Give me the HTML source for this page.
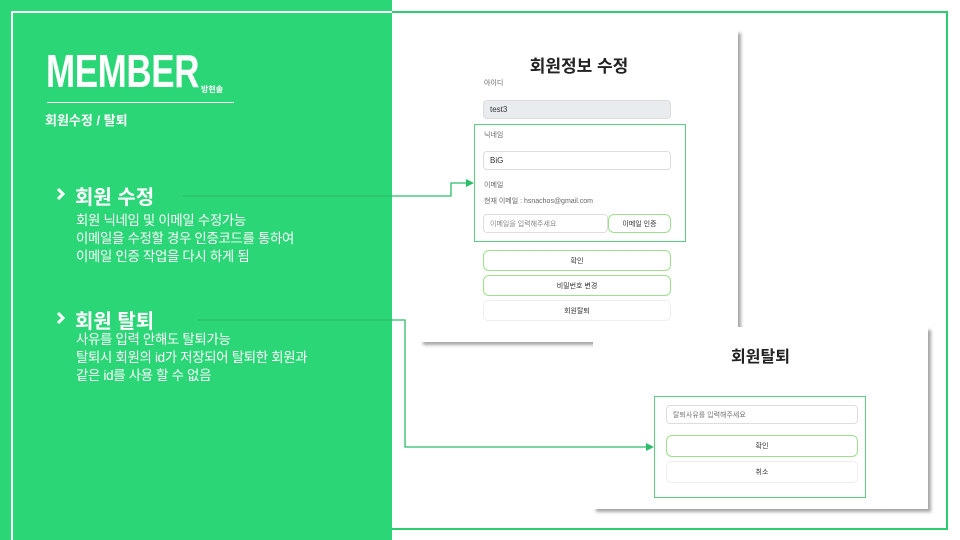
<!DOCTYPE html>
<html><head><meta charset="utf-8"><style>
*{margin:0;padding:0;box-sizing:border-box}
body{width:960px;height:540px;position:relative;background:#fff;font-family:"Liberation Sans","Noto Sans CJK KR",sans-serif;overflow:hidden}
.abs{position:absolute}
.green{left:0;top:0;width:392px;height:540px;background:#2bd677}
.w{color:#fff}
.card{background:#fff;box-shadow:3px 3px 3px rgba(0,0,0,.35)}
.lbl{font-size:7px;color:#666}
.inp{border:1px solid #ddd;border-radius:4px;font-size:8px;color:#333;padding-left:6px;display:flex;align-items:center;background:#fff}
.btn{border:1.5px solid #9ee08e;border-radius:6px;font-size:7px;color:#333;display:flex;align-items:center;justify-content:center;background:#fff}
.btn2{border:1px solid #eee;border-radius:5px;font-size:7px;color:#333;display:flex;align-items:center;justify-content:center}
.desc{font-size:13.4px;line-height:18px;letter-spacing:-0.3px}
</style></head><body>
<div class="abs green"></div>
<div class="abs" style="left:392px;top:11px;width:556px;height:519px;border:2px solid #2ecc71;border-left:none"></div>
<div class="abs" style="left:11px;top:11px;width:381px;height:529px;border:2px solid #fff;border-right:none;border-bottom:none"></div>

<div class="abs w" style="left:46px;top:44px;font-size:46px;font-weight:bold;letter-spacing:-0.5px;transform:scaleX(.76);transform-origin:left top">MEMBER</div>
<div class="abs w" style="left:201px;top:84px;font-size:8px;font-weight:bold">방현솔</div>
<div class="abs" style="left:47px;top:102px;width:187px;height:1px;background:#fff"></div>
<div class="abs w" style="left:45px;top:110px;font-size:13px;font-weight:bold">회원수정 / 탈퇴</div>

<svg class="abs" style="left:55px;top:187px" width="12" height="14"><polyline points="3,2 8,7 3,12" fill="none" stroke="#fff" stroke-width="3"/></svg>
<div class="abs w" style="left:75px;top:181px;font-size:20px;font-weight:bold">회원 수정</div>
<div class="abs w desc" style="left:76px;top:212px">회원 닉네임 및 이메일 수정가능<br>이메일을 수정할 경우 인증코드를 통하여<br>이메일 인증 작업을 다시 하게 됨</div>
<svg class="abs" style="left:55px;top:311px" width="12" height="14"><polyline points="3,2 8,7 3,12" fill="none" stroke="#fff" stroke-width="3"/></svg>
<div class="abs w" style="left:75px;top:305px;font-size:20px;font-weight:bold">회원 탈퇴</div>
<div class="abs w desc" style="left:76px;top:331px">사유를 입력 안해도 탈퇴가능<br>탈퇴시 회원의 id가 저장되어 탈퇴한 회원과<br>같은 id를 사용 할 수 없음</div>

<div class="abs card" style="left:420px;top:30px;width:318px;height:312px"></div>
<div class="abs" style="left:420px;top:52px;width:318px;text-align:center;font-size:17px;font-weight:bold;color:#222">회원정보 수정</div>
<div class="abs lbl" style="left:484px;top:78px">아이디</div>
<div class="abs inp" style="left:483px;top:100px;width:188px;height:19px;background:#e9ecef">test3</div>
<div class="abs" style="left:474px;top:124px;width:212px;height:118px;border:1px solid #5ccf82"></div>
<div class="abs lbl" style="left:484px;top:130px">닉네임</div>
<div class="abs inp" style="left:483px;top:151px;width:188px;height:19px">BiG</div>
<div class="abs lbl" style="left:484px;top:180px">이메일</div>
<div class="abs lbl" style="left:484px;top:196px">현재 이메일 : hsnachos@gmail.com</div>
<div class="abs inp" style="left:483px;top:214px;width:125px;height:19px;color:#888;font-size:7px">이메일을 입력해주세요</div>
<div class="abs btn" style="left:608px;top:214px;width:63px;height:19px">이메일 인증</div>
<div class="abs btn" style="left:483px;top:250px;width:188px;height:21px">확인</div>
<div class="abs btn" style="left:483px;top:275px;width:188px;height:21px">비밀번호 변경</div>
<div class="abs btn2" style="left:483px;top:300px;width:188px;height:21px">회원탈퇴</div>

<div class="abs card" style="left:593px;top:327px;width:335px;height:182px"></div>
<div class="abs" style="left:593px;top:343px;width:335px;text-align:center;font-size:16px;font-weight:bold;color:#222">회원탈퇴</div>
<div class="abs" style="left:654px;top:396px;width:212px;height:102px;border:1px solid #5ccf82"></div>
<div class="abs inp" style="left:666px;top:405px;width:192px;height:19px;color:#777;font-size:7px">탈퇴사유를 입력해주세요</div>
<div class="abs btn" style="left:666px;top:435px;width:192px;height:22px">확인</div>
<div class="abs btn2" style="left:666px;top:461px;width:192px;height:22px">취소</div>

<svg class="abs" style="left:0;top:0" width="960" height="540">
<polyline points="183,196 451,196 451,183 467,183" fill="none" stroke="#2bbd6a" stroke-width="1.3"/>
<polygon points="466,179 474,183 466,187" fill="#2bbd6a"/>
<polyline points="198,320 405,320 405,447 647,447" fill="none" stroke="#2bbd6a" stroke-width="1.3"/>
<polygon points="646,443 654,447 646,451" fill="#2bbd6a"/>
</svg>
</body></html>
